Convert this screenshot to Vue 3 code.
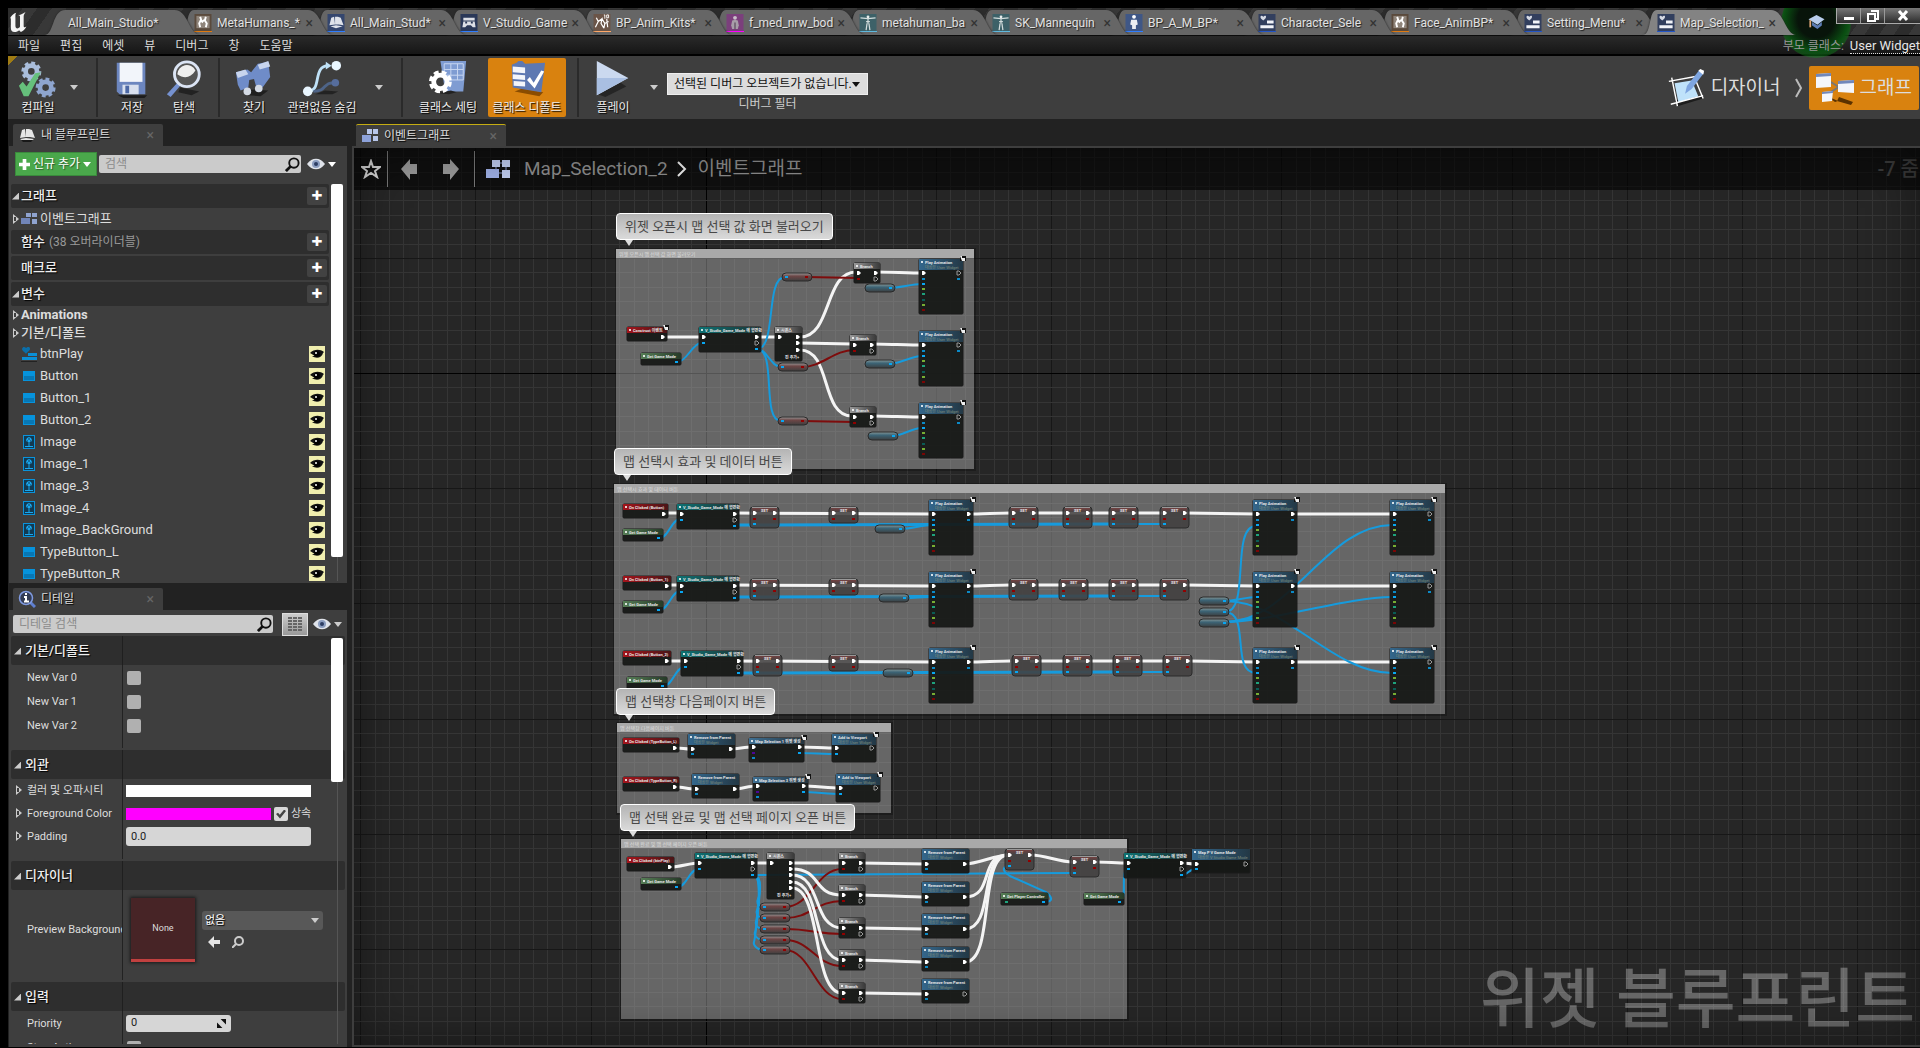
<script setup>
const tabs = [
  { name: 'MetaHumans_*', icon: 'anim', line: '#e07a10' },
  { name: 'All_Main_Stud*', icon: 'level', line: '#2f7dff' },
  { name: 'V_Studio_Game', icon: 'pad', line: '#2f7dff' },
  { name: 'BP_Anim_Kits*', icon: 'kit', line: '#ffa868' },
  { name: 'f_med_nrw_bod', icon: 'body', line: '#ff00ff' },
  { name: 'metahuman_ba', icon: 'skel', line: '#5fb8de' },
  { name: 'SK_Mannequin', icon: 'skel', line: '#5fb8de' },
  { name: 'BP_A_M_BP*', icon: 'person', line: '#2f7dff' },
  { name: 'Character_Sele', icon: 'widget', line: '#2456c8' },
  { name: 'Face_AnimBP*', icon: 'anim', line: '#e07a10' },
  { name: 'Setting_Menu*', icon: 'widget', line: '#2456c8' },
  { name: 'Map_Selection_', icon: 'widget', line: '#2456c8', active: true },
]
const menus = ['파일', '편집', '에셋', '뷰', '디버그', '창', '도움말']

const tabGlyphs = {
  anim: '<rect width="18" height="18" fill="#5a4a3c"/><rect x="2" y="2" width="14" height="13" fill="#8f857b"/><path d="M6 3l1 3-2 4 1 4M6 6l3 3M12 3l-1 4 2 3-1 4M11 6l-3 2" stroke="#fff" stroke-width="2" fill="none"/>',
  level: '<rect width="18" height="18" fill="#34466e"/><path d="M2 12L4 4l3-1 1 8zM8 11V3h3l1 8zM12 11l-1-8 3 1 3 8zM3 13l6-1 7 1-7 2z" fill="#dfe3ea"/>',
  pad: '<rect width="18" height="18" fill="#2a3858"/><path d="M3 4h12v3H3zM3 8h12l1 6h-3l-2-2H7l-2 2H2z" fill="#dcdfe6"/><path d="M5 9h2M11 9h2" stroke="#2a3858" stroke-width="2"/>',
  kit: '<rect width="18" height="18" fill="#6b5548"/><path d="M3 4l2 4-3 6M5 8l4-3-1 5 3 5M9 5l3 5 4-2M12 10l-1 5M14 5l1 9" stroke="#fff" stroke-width="1.3" fill="none"/><path d="M11 1h1v4M14 1h2v3h-2z" stroke="#fff" fill="none"/>',
  body: '<rect width="18" height="18" fill="#7b3f7c"/><circle cx="9" cy="4" r="2" fill="#c9c0c9"/><path d="M6 7l3-1 3 1 1 5-1 4H6l-1-4z" fill="#a79da8"/><path d="M9 9v7" stroke="#463046"/>',
  skel: '<rect width="18" height="18" fill="#3d6168"/><path d="M1 4l8 1 8-1M9 2v8M7 8h4M8 10l-1 7M10 10l1 7" stroke="#d2dcdc" stroke-width="1.3" fill="none"/><circle cx="9" cy="3" r="1.5" fill="#e8eded"/>',
  person: '<rect width="18" height="18" fill="#3f5786"/><circle cx="9" cy="3" r="2" fill="#fff"/><path d="M6 6h6l1 5-2 1v4H7v-4l-2-1z" fill="#eceef2"/>',
  widget: '<rect width="18" height="18" fill="#323f5e"/><path d="M2 3c1-2 2-1 3 0 1-1 3-2 3 0 0 2-2 3-3 4C4 6 2 5 2 3z" fill="#d6dae4"/><path d="M9 7h7v3H9zM2 12h14v3H2z" fill="#f1f3f8"/>',
}

const bigGlyphs = {
  compile: '<circle cx="14" cy="13" r="6" fill="none" stroke="#a9bddb" stroke-width="5"/><circle cx="14" cy="13" r="9" fill="none" stroke="#a9bddb" stroke-width="3" stroke-dasharray="4 3"/><circle cx="29" cy="30" r="6" fill="none" stroke="#8ea5cf" stroke-width="5"/><circle cx="29" cy="30" r="9" fill="none" stroke="#8ea5cf" stroke-width="3" stroke-dasharray="4 3"/><path d="M1 28l4-4 4 5 9-14 6-1L11 39H6z" fill="#66c07c"/>',
  save: '<path d="M6 38h31l-3 3H12z" fill="#1c1c1c"/><path d="M5 4h30v33H8l-3-3z" fill="#6c86bf"/><path d="M8 4h24v20H8z" fill="#f2f5fa"/><path d="M11 27h17v10H11z" fill="#d9e0ee"/><path d="M14 28h4v8h-4z" fill="#4c68a5"/>',
  find: '<path d="M17 30l20 4-8 4-14-3z" fill="#222"/><path d="M3 37l12-13 3 3L7 40z" fill="#7591cf"/><circle cx="24" cy="16" r="13" fill="#555" stroke="#dbe4f4" stroke-width="3"/><path d="M14 16a10 10 0 0 1 19-4c-5 8-12 9-19 4z" fill="#eee"/>',
  binoc: '<path d="M14 32l22 1-8 6-14-1z" fill="#1f1f1f"/><path d="M2 14l12-3 4 3 7-9 11-2 2 16-8 11-7-2-2-7-5 1-1 8-8 3-3-6z" fill="#6f8cc8"/><path d="M2 14l10-3 3 5-11 4zM25 6l11-4 2 6-11 3z" fill="#c8d5ee"/><circle cx="14" cy="34" r="4" fill="#d4dae4"/><circle cx="26" cy="31" r="4" fill="#d4dae4"/>',
  hide: '<path d="M14 37h18l6-3-14-1z" fill="#222"/><path d="M6 34c16 0 4-27 22-27" stroke="#bfe1f7" stroke-width="3" fill="none"/><path d="M12 34c14 0 10-9 20-9" stroke="#4e6488" stroke-width="3" fill="none"/><path d="M25 3l6 4-6 4z" fill="#bfe1f7"/><circle cx="36" cy="7" r="5" fill="#e9f6ff"/><circle cx="35" cy="25" r="4" fill="#566d9c"/><circle cx="6" cy="34" r="5" fill="#e9f6ff"/>',
  settings: '<path d="M13 2h27l-3 32H18z" fill="#7f9cd2"/><path d="M17 5h20v17H17zM17 11h20M24 5v17M31 5v17M17 17h20" stroke="#c9d8f1" fill="none"/><path d="M10 36l12 1 8-2-6-2z" fill="#222"/><circle cx="13" cy="24" r="7" fill="none" stroke="#fff" stroke-width="5"/><circle cx="13" cy="24" r="10" fill="none" stroke="#fff" stroke-width="4" stroke-dasharray="5 3"/>',
  defaults: '<path d="M8 34l26 5 4-4-22-4z" fill="#8a4c00"/><path d="M5 6l5-2 2-2h4l3 3 21-1-4 31-30-5z" fill="#5d78b2"/><path d="M6 8l13 1v6l-13-1zM6 16l13 1v5l-13-1zM7 23l12 1v5l-12-1z" fill="#f3f5fa"/><path d="M21 22l3-3 4 6 8-13 3 1-10 18z" fill="#fff"/>',
  play: '<path d="M5 37l24-12 6 4-22 11z" fill="#252525"/><path d="M4 2l33 18L4 38z" fill="#cbd9ef"/><path d="M4 20h33L4 38z" fill="#a9bfe2"/>',
}

const toolsA = [
  { label: '컴파일', icon: 'compile', cls: 'w42', drop: true },
  { sep: true },
  { label: '저장', icon: 'save', cls: 'w52' },
  { label: '탐색', icon: 'find', cls: 'w52' },
  { sep: true },
  { label: '찾기', icon: 'binoc', cls: 'w52' },
  { label: '관련없음 숨김', icon: 'hide', cls: 'w84', drop: true },
  { sep: true },
  { label: '클래스 세팅', icon: 'settings', cls: 'w74' },
  { label: '클래스 디폴트', icon: 'defaults', cls: 'w78 on' },
  { sep: true },
  { label: '플레이', icon: 'play', cls: 'w52', drop: true },
]

const varGlyphs = {
  widget: '<path d="M1 3c1-3 3-2 4-1 1-1 4-2 4 1 0 2-3 3-4 5C4 6 1 5 1 3z" fill="#0b6ea8"/><path d="M7 7h9v3H7zM1 11h15v3H1z" fill="#0a8fd6"/><path d="M0 15h16v1H0z" fill="#222"/>',
  button: '<rect x="2" y="3" width="12" height="10" fill="#0693dc"/><rect x="3" y="8" width="10" height="4" fill="#0877b4"/>',
  image: '<rect x="2.500" y="1.500" width="11" height="13" fill="#123a52" stroke="#0a93db"/><path d="M8 3l2 1 1 2-1 2H6L5 6l1-2z" fill="#19a8f0"/><path d="M7 5h2M6 7h1M9 7h1" stroke="#123a52"/><path d="M8 8v4M4 12.500h8" stroke="#19a8f0" fill="none"/>',
}
const variables = [
  ['btnPlay', 'widget'], ['Button', 'button'], ['Button_1', 'button'], ['Button_2', 'button'],
  ['Image', 'image'], ['Image_1', 'image'], ['Image_3', 'image'], ['Image_4', 'image'],
  ['Image_BackGround', 'image'], ['TypeButton_L', 'button'], ['TypeButton_R', 'button'],
]

/* ---- graph canvas ---- */
const STEP = 14.394
const lines = (from, origin, major, count) =>
  Array.from({ length: count }, (_, i) => i - from).map((k) => ({
    at: Math.floor(origin + k * STEP),
    kind: k === major ? 'axis' : k % 8 === 0 ? 'major' : 'minor',
  })).sort((a, b) => (a.kind === 'minor' ? 0 : 1) - (b.kind === 'minor' ? 0 : 1))
const vLines = lines(0, 360.7, 24, 180)
const hLines = lines(8, 258.4, 8, 110)

const comments = [
  { x: 616, y: 249, w: 358, h: 220, bx: 616, by: 213, text: '위젯 오픈시 맵 선택 값 화면 불러오기' },
  { x: 614, y: 484, w: 831, h: 230, bx: 614, by: 448, text: '맵 선택시 효과 및 데이터 버튼' },
  { x: 617, y: 723, w: 274, h: 90, bx: 616, by: 688, text: '맵 선택창 다음페이지 버튼' },
  { x: 621, y: 839, w: 506, h: 180, bx: 620, by: 804, text: '맵 선택 완료 및 맵 선택 페이지 오픈 버튼' },
]

const nodes = []
const pins = []
const pills = []
const marks = []
const wires = []
const pin = (x, y, c = 'exec', open = false) => pins.push({ x, y, c, open })
const node = (kind, x, y, w, h, title, sub) => nodes.push({ kind, x, y, w, h, title, sub, hh: sub ? 11 : 6 })
const wire = (c, x1, y1, x2, y2, t = 8, k = '') =>
  wires.push({ c: c + ' ' + k, d: `M${x1} ${y1}C${x1 + t} ${y1} ${x2 - t} ${y2} ${x2} ${y2}` })

function eventNode(x, y, w, title) {
  node('event', x, y, w, 14, title)
  pin(x + w - 5, y + 10)
}
function getter(x, y, title = 'Get Game Mode', w = 40) {
  node('pure', x, y, w, 12, title)
  pin(x + w - 5, y + 9, 'obj')
}
function cast(x, y) {
  node('cast', x, y, 62, 25, 'V_Studio_Game_Mode 에 형변환')
  pin(x + 4, y + 10); pin(x + 4, y + 16, 'obj')
  pin(x + 57, y + 10); pin(x + 57, y + 16, 'exec', true); pin(x + 57, y + 22, 'obj')
}
function branch(x, y) {
  node('flow', x, y, 26, 20, 'Branch')
  pin(x + 4, y + 10); pin(x + 4, y + 16, 'bool'); pin(x + 21, y + 10); pin(x + 21, y + 16, 'exec', true)
}
function playAnim(x, y, last) {
  node('func', x, y, 44, 55, 'Play Animation', '대상은 User Widget')
  pin(x + 4, y + 14); pin(x + 4, y + 20, 'obj', true); pin(x + 4, y + 25, 'obj')
  pin(x + 4, y + 30, 'float', true); pin(x + 4, y + 35, 'int', true); pin(x + 4, y + 41, 'byte', true)
  pin(x + 4, y + 46, 'float', true); pin(x + 4, y + 51, 'bool', true)
  pin(x + 39, y + 14, 'exec', last); pin(x + 39, y + 20, 'obj', true)
  marks.push([x + 44, y - 1])
}
function setter(x, y, tall = true) {
  node('set', x, y, 29, tall ? 21 : 16, 'SET')
  pin(x + 4, y + 6); pin(x + 24, y + 6); pin(x + 4, y + 12, 'bool'); pin(x + 24, y + 12, 'bool')
  if (tall) pin(x + 4, y + 17, 'obj')
}
function remove(x, y, open) {
  node('func', x, y, 47, 24, 'Remove from Parent', '대상은 Widget')
  pin(x + 4, y + 15); pin(x + 4, y + 20, 'obj', true); pin(x + 42, y + 15, 'exec', open)
}
function pill(x, y, kind) {
  pills.push({ x, y, kind })
  if (kind === 'bool') { pin(x + 4, y + 4, 'obj'); pin(x + 24, y + 4, 'bool') } else pin(x + 25, y + 4, 'obj')
}

/* opening group */
eventNode(627, 327, 40, 'Construct 이벤트')
marks.push([666, 327])
getter(641, 353)
cast(699, 327)
node('flow', 775, 327, 27, 34, '시퀀스')
pin(779, 337)
;[337, 343, 350].forEach((y) => pin(797, y))
pill(782, 273, 'bool'); pill(778, 363, 'bool'); pill(778, 417, 'bool')
branch(854, 263); branch(850, 335); branch(850, 407)
pill(865, 284, 'obj'); pill(865, 360, 'obj'); pill(868, 432, 'obj')
playAnim(919, 259, true); playAnim(919, 331, true); playAnim(919, 403, true)
wire('exec', 664, 337, 700, 337)
wire('exec', 758, 337, 777, 337)
wire('exec', 800, 337, 856, 272, 32)
wire('exec', 800, 343, 852, 344)
wire('exec', 800, 350, 852, 416, 32)
wire('exec', 877, 272, 921, 273)
wire('exec', 873, 344, 921, 345)
wire('exec', 873, 416, 921, 417)
wire('obj', 678, 362, 701, 343)
wire('obj', 757, 349, 785, 277, 20)
wire('obj', 757, 349, 781, 367, 10)
wire('obj', 757, 349, 781, 421, 20)
wire('bool', 806, 277, 858, 278)
wire('bool', 802, 367, 854, 350, 20)
wire('bool', 802, 421, 854, 422)
wire('obj', 890, 288, 921, 284)
wire('obj', 890, 364, 921, 356)
wire('obj', 893, 436, 921, 428)

/* selection rows */
const rows = [
  { y: 504, ew: 45, gx: 623, gy: 529, cx: 677, s: [750, 829, 1009, 1063, 1109, 1160], px: 875, py: 525, py0: 500, t: 'On Clicked (Button)' },
  { y: 576, ew: 48, gx: 623, gy: 601, cx: 677, s: [750, 829, 1009, 1059, 1109, 1160], px: 879, py: 594, py0: 572, t: 'On Clicked (Button_1)' },
  { y: 651, ew: 48, gx: 627, gy: 677, cx: 681, s: [753, 829, 1012, 1063, 1113, 1163], px: 883, py: 669, py0: 648, t: 'On Clicked (Button_2)' },
]
rows.forEach((r) => {
  const sy = r.py0 + 7
  const ex = r.py0 + 14
  eventNode(623, r.y, r.ew, r.t)
  getter(r.gx, r.gy)
  cast(r.cx, r.y)
  r.s.forEach((x, i) => setter(x, sy, i !== 1))
  pill(r.px, r.py, 'obj')
  playAnim(929, r.py0); playAnim(1253, r.py0); playAnim(1390, r.py0, true)
  wire('exec', 664, ex - 1, r.cx + 2, ex - 1)
  wire('exec', r.cx + 58, ex - 1, 932, ex)
  wire('exec', 970, ex, 1010, ex - 1)
  wire('exec', 1030, ex - 1, r.s[5] + 4, ex - 1)
  wire('exec', r.s[5] + 26, ex - 1, 1256, ex)
  wire('exec', 1294, ex, 1393, ex)
  wire('obj', r.gx + 37, r.gy + 9, r.cx + 3, ex + 5)
  wire('obj', r.cx + 58, ex + 11, r.s[4] + 4, ex + 10, 8, 'thick')
  wire('obj', r.s[4], ex + 10, r.s[5] + 4, ex + 10)
  wire('obj', r.px + 26, r.py + 4, 932, ex + 11)
})
pill(1199, 597, 'obj'); pill(1199, 608, 'obj'); pill(1199, 619, 'obj')
wire('obj', 1225, 601, 1256, 597)
wire('obj', 1225, 601, 1392, 673, 60)
wire('obj', 1225, 612, 1256, 526, 26)
wire('obj', 1225, 612, 1256, 673, 26)
wire('obj', 1225, 622, 1392, 525, 66)
wire('obj', 1225, 622, 1392, 597, 46)
wire('obj', 1225, 622, 1256, 618, 10)

/* paging rows */
;[[0, 738, 734, 'On Clicked (TypeButton_L)', 'Map Selection 1 위젯 생성'], [4, 777, 774, 'On Clicked (TypeButton_R)', 'Map Selection 3 위젯 생성']].forEach(([dx, y, fy, t, m]) => {
  eventNode(623, y, 56, t)
  remove(688 + dx, fy)
  node('make', 749 + dx, y, 55, 24, m)
  pin(753 + dx, y + 9); pin(753 + dx, y + 15, 'cls', true); pin(753 + dx, y + 20, 'obj', true)
  pin(799 + dx, y + 9); pin(799 + dx, y + 15, 'obj')
  node('func', 832 + dx, fy, 44, 28, 'Add to Viewport', '대상은 User Widget')
  pin(836 + dx, fy + 14); pin(836 + dx, fy + 20, 'obj'); pin(871 + dx, fy + 14, 'exec', true)
  marks.push([804 + dx, y - 1], [876 + dx, fy])
  wire('exec', 677, y + 10, 690 + dx, fy + 15, 4)
  wire('exec', 731 + dx, fy + 15, 751 + dx, y + 9, 4)
  wire('exec', 801 + dx, y + 9, 834 + dx, fy + 14, 4)
  wire('obj', 801 + dx, y + 15, 834 + dx, fy + 20, 4)
})

/* completion group */
eventNode(627, 857, 47, 'On Clicked (btnPlay)')
getter(641, 878)
cast(695, 853)
node('flow', 767, 853, 27, 46, '시퀀스')
pin(771, 863)
wire('exec', 672, 867, 698, 863, 6)
wire('obj', 678, 887, 698, 869)
wire('exec', 754, 863, 769, 863)
wire('obj', 754, 875, 1074, 873, 8)
;[0, 1, 2, 3, 4].forEach((i) => {
  const by = [853, 885, 918, 950, 983][i]
  const ry = [849, 882, 914, 947, 979][i]
  const py = [903, 914, 925, 936, 946][i]
  const oy = [863, 869, 875, 882, 888][i]
  pin(790, oy)
  pill(760, py, 'bool')
  branch(839, by)
  remove(922, ry, i === 4)
  wire('exec', 792, oy, 842, by + 10, i ? 30 : 4)
  wire('exec', 861, by + 10, 925, ry + 15)
  wire('bool', 785, py + 4, 842, by + 16, 26)
  wires.push({ c: 'obj', d: `M754 875C764 877 ${759 - i} ${py - 6} ${758 - i} ${py - 4}S756 ${py + 4} 764 ${py + 4}` })
  if (i < 4) wire('exec', 965, ry + 15, 1008, 855, i ? 30 : 12)
})
setter(1005, 849); setter(1070, 856)
getter(1001, 893, 'Get Player Controller', 47)
pin(1006, 902, 'int', true)
getter(1084, 893)
cast(1124, 853)
node('func', 1192, 849, 58, 24, 'Map P V Game Mode', '대상은 V Studio Game Mode')
pin(1196, 864); pin(1196, 869, 'obj'); pin(1245, 864, 'exec', true)
wire('exec', 1031, 855, 1073, 862, 14)
wire('exec', 1096, 862, 1127, 863)
wire('exec', 1182, 863, 1195, 864, 3)
wire('obj', 1182, 875, 1195, 869, 5)
wires.push({ c: 'obj', d: 'M1044 902C1056 902 1050 895 1046 892L1010 876C1000 870 1004 866 1009 866' })
wires.push({ c: 'obj', d: 'M1120 902C1128 898 1120 874 1127 869' })
</script>

<template>
  <div class="editor">
    <header class="titlebar">
      <svg class="logo" viewBox="0 0 24 24" aria-label="Unreal"><path d="M1 9c1-4 4-6 7-7-1 1-1 2-1 4v10c0 2 1 3 2 3s3-1 3-2V6c0-1-1-1-2-1 2-1 5-2 8-4-1 2-2 3-2 5v10c0 2 1 2 3 1-2 4-4 5-6 6l-2-2c-1 1-3 2-5 2-3 0-4-2-4-5V8c0-1-1-1-1 1z" fill="#f4f4f4"/></svg>
      <nav class="tabs">
        <button class="tab first">
          <svg class="shape" viewBox="0 0 153 25" preserveAspectRatio="none"><path d="M0 25C9 24 7 0 20 0H128C141 0 142 24 153 25z" /></svg>
          <span>All_Main_Studio*</span>
        </button>
        <button v-for="(t, i) in tabs" :key="t.name" class="tab" :class="{ active: t.active }" :style="{ zIndex: t.active ? 30 : 20 - i }">
          <svg class="shape" viewBox="0 0 153 25" preserveAspectRatio="none"><path d="M0 25C9 24 5 0 14 0H128C141 0 142 24 153 25z" /></svg>
          <svg class="ticon" viewBox="0 0 18 18" :style="{ borderBottomColor: t.line }" v-html="tabGlyphs[t.icon]"></svg>
          <span>{{ t.name }}</span><i>×</i>
        </button>
      </nav>
      <div class="halo"></div>
      <svg class="hat" viewBox="0 0 20 18"><path d="M1 6l9-5 9 5-8 6z" fill="#b9cdec"/><path d="M5 9l6 4 5-4v4l-5 4-6-4z" fill="#5d7cb5"/><path d="M3 7v8" stroke="#e2a878" stroke-width="2"/></svg>
      <div class="winbtns">
        <button aria-label="최소화"><svg viewBox="0 0 12 12"><path d="M1 7h10v3H1z" fill="#fff"/></svg></button>
        <button aria-label="복원"><svg viewBox="0 0 12 12"><path d="M4 1h7v8H9M1 4h7v7H1z" fill="none" stroke="#fff" stroke-width="2"/></svg></button>
        <button aria-label="닫기"><svg viewBox="0 0 12 12"><path d="M2 1l8 9M10 1l-8 9" stroke="#fff" stroke-width="3"/></svg></button>
      </div>
    </header>

    <nav class="menubar">
      <button v-for="m in menus" :key="m">{{ m }}</button>
      <span class="parent">부모 클래스:</span><a href="#">User Widget</a>
    </nav>

    <section class="toolbar">
      <template v-for="(t, i) in toolsA" :key="i">
        <div v-if="t.sep" class="sep"></div>
        <template v-else>
          <button class="tool" :class="t.cls">
            <svg viewBox="0 0 42 42" v-html="bigGlyphs[t.icon]"></svg>
            <span>{{ t.label }}</span>
          </button>
          <button v-if="t.drop" class="drop" :aria-label="t.label + ' 옵션'"><i class="down"></i></button>
        </template>
      </template>
      <div class="debug">
        <div class="selwrap">
          <select id="dbg"><option>선택된 디버그 오브젝트가 없습니다.</option></select><i class="down dark"></i>
        </div>
        <label for="dbg">디버그 필터</label>
      </div>
      <div class="modes">
        <button class="mode">
          <svg viewBox="0 0 40 42"><path d="M8 34l28-5 2 3-26 8z" fill="#1d1d1d"/><path d="M8 16l18-3 7 17-21 6z" fill="#bfe2fa"/><path d="M2 14l28-5M5 10l6 30M4 38l34-9M29 10l9 22" stroke="#fff" stroke-width="1.5" fill="none"/><path d="M19 27l2-8L34 2l5 3-13 17z" fill="#7ea5e0"/><path d="M33 3l2-2 4 2-1 4z" fill="#fff"/></svg>
          디자이너
        </button>
        <svg class="chev" viewBox="0 0 8 20"><path d="M1 1l5 9-5 9" fill="none" stroke="#bbb" stroke-width="2"/></svg>
        <button class="mode on">
          <svg viewBox="0 0 40 34"><path d="M12 25l8 6 3-1zM24 26l14 5-2 3-14-4z" fill="#5a3200"/><path d="M14 10l10 6M14 22l10-6" stroke="#777" stroke-width="2"/><path d="M1 3l15-1v14L1 17zM23 10l16-1v13l-16-1zM7 21l11-1-1 10-10 1z" fill="#f4f6fb"/><path d="M1 3l15-1v3L1 6zM23 10l16-1v3l-16 1zM7 21l11-1v2l-11 1z" fill="#7188bb"/></svg>
          그래프
        </button>
      </div>
    </section>

    <main class="work">
      <aside class="side">
        <div class="ptab">
          <svg viewBox="0 0 18 18"><path d="M2 12L4 4l3-1 1 8zM8 11V3h3l1 8zM12 11l-1-8 3 1 3 8zM2 13l6-1 8 1-3 2H5z" fill="#e6e6e6"/><path d="M3 14h12l-2 2H5z" fill="#181818"/></svg>
          <span>내 블루프린트</span><i>×</i>
        </div>
        <section class="panel bp">
          <div class="bar">
            <button class="add"><svg viewBox="0 0 12 12"><path d="M4 0h4v4h4v4H8v4H4V8H0V4h4z" fill="#fff"/></svg>신규 추가<i class="down white"></i></button>
            <div class="search"><input type="text" placeholder="검색" aria-label="검색"><svg viewBox="0 0 16 16"><circle cx="9.500" cy="6.500" r="5" fill="none" stroke="#111" stroke-width="2"/><path d="M6 10l-5 5" stroke="#111" stroke-width="3"/></svg></div>
            <button class="eye" aria-label="보기 옵션"><svg viewBox="0 0 18 12"><path d="M0 6c5-7 13-7 18 0-5 7-13 7-18 0z" fill="#dfe3ea"/><circle cx="9" cy="6" r="4" fill="#8b9dc0"/><circle cx="9" cy="6" r="2" fill="#2c3d63"/></svg><i class="down white"></i></button>
          </div>
          <div class="listwrap">
            <div class="list">
              <div class="head"><i class="open"></i><b>그래프</b><button aria-label="그래프 추가">✚</button></div>
              <div class="row"><i class="shut"></i>
                <svg class="vi" viewBox="0 0 16 16"><path d="M5 2h5v4H5zM11 2h5v4h-5zM11 8h5v5h-5z" fill="#8fa3cf"/><path d="M0 7h9v6H0z" fill="#7185b8"/></svg><span>이벤트그래프</span></div>
              <div class="head"><i></i><b>함수</b><small>(38 오버라이더블)</small><button aria-label="함수 추가">✚</button></div>
              <div class="head gap"><i></i><b>매크로</b><button aria-label="매크로 추가">✚</button></div>
              <div class="head gap"><i class="open"></i><b>변수</b><button aria-label="변수 추가">✚</button></div>
              <div class="row cat"><i class="shut"></i><b>Animations</b></div>
              <div class="row cat last"><i class="shut"></i><b>기본/디폴트</b></div>
              <div v-for="v in variables" :key="v[0]" class="row"><i></i>
                <svg class="vi" viewBox="0 0 16 16" v-html="varGlyphs[v[1]]"></svg><span>{{ v[0] }}</span>
                <button class="vis" :aria-label="v[0] + ' 표시'"><svg viewBox="0 0 16 16"><path d="M1 7c4-4 10-4 14-1l-1 1c-1 5-7 6-11 3l3 0c-2-1-3-2-5-3z" fill="#111"/><circle cx="8" cy="8" r="3" fill="#000"/><circle cx="7" cy="7" r="1" fill="#fff"/></svg></button>
              </div>
            </div>
            <div class="scroll"><div></div></div>
          </div>
        </section>

        <div class="ptab second">
          <svg viewBox="0 0 18 18"><path d="M12 12l5 5" stroke="#5f7fd0" stroke-width="3"/><circle cx="8" cy="8" r="6.500" fill="#333c55" stroke="#7f9ae0" stroke-width="1.500"/><path d="M8 3v2M6 7h2v4M6 11.500h5" stroke="#fff" stroke-width="2" fill="none"/></svg>
          <span>디테일</span><i>×</i>
        </div>
        <section class="panel details">
          <div class="bar">
            <div class="search"><input type="text" placeholder="디테일 검색" aria-label="디테일 검색"><svg viewBox="0 0 16 16"><circle cx="9.500" cy="6.500" r="5" fill="none" stroke="#111" stroke-width="2"/><path d="M6 10l-5 5" stroke="#111" stroke-width="3"/></svg></div>
            <button class="matrix" aria-label="프로퍼티 매트릭스"><svg viewBox="0 0 14 14"><path d="M0 1h4M5 1h4M10 1h4M0 4h4M5 4h4M10 4h4M0 7h4M5 7h4M10 7h4M0 10h4M5 10h4M10 10h4M0 13h4M5 13h4M10 13h4" stroke="#666" stroke-width="2"/></svg></button>
            <button class="eye" aria-label="디테일 보기 옵션"><svg viewBox="0 0 18 12"><path d="M0 6c5-7 13-7 18 0-5 7-13 7-18 0z" fill="#dfe3ea"/><circle cx="9" cy="6" r="4" fill="#8b9dc0"/><circle cx="9" cy="6" r="2" fill="#2c3d63"/></svg><i class="down"></i></button>
          </div>
          <div class="props">
            <div class="group">
              <h3><i class="open"></i>기본/디폴트</h3>
              <div v-for="n in 3" :key="n" class="prop"><label :for="'nv' + n">New Var {{ n - 1 }}</label><div><input :id="'nv' + n" type="checkbox"></div></div>
            </div>
            <div class="group tight">
              <h3><i class="open"></i>외관</h3>
              <div class="prop"><label><i class="shut"></i>컬러 및 오파시티</label><div><button class="swatch" aria-label="컬러 및 오파시티"></button></div></div>
              <div class="prop"><label><i class="shut"></i>Foreground Color</label><div><button class="swatch pink" aria-label="Foreground Color"></button><input id="inh" type="checkbox" checked><label for="inh" class="inh">상속</label></div></div>
              <div class="prop"><label for="pad"><i class="shut"></i>Padding</label><div><input id="pad" class="field" type="text" value="0.0"></div></div>
            </div>
            <div class="group">
              <h3><i class="open"></i>디자이너</h3>
              <div class="prop tall"><label for="asset">Preview Background</label>
                <div><div class="thumb">None</div>
                  <div class="pick"><div class="selwrap"><select id="asset"><option>없음</option></select><i class="down"></i></div>
                    <div class="acts"><button aria-label="선택 항목 사용"><svg viewBox="0 0 12 12"><path d="M0 6l6-6v4h6v4H6v4z" fill="#e4e4e4"/></svg></button><button aria-label="찾아보기"><svg viewBox="0 0 12 12"><circle cx="7" cy="5" r="4" fill="none" stroke="#ccc" stroke-width="2"/><path d="M4 8l-4 4" stroke="#ccc" stroke-width="2"/></svg></button></div></div></div>
              </div>
            </div>
            <div class="group">
              <h3><i class="open"></i>입력</h3>
              <div class="prop"><label for="prio">Priority</label><div><div class="spin"><input id="prio" class="field" type="text" value="0"><svg viewBox="0 0 10 10"><path d="M4 0h6v6zM0 4l6 6H0z" fill="#111"/></svg></div></div></div>
              <div class="prop"><label for="stop">Stop Action</label><div><input id="stop" type="checkbox"></div></div>
            </div>
            <div class="scroll over"><div></div></div>
          </div>
        </section>
      </aside>

      <section class="main">
        <div class="ptab live">
          <svg viewBox="0 0 18 18"><path d="M6 2h5v5H6zM12 2h5v5h-5zM12 9h5v5h-5z" fill="#b7c6ea"/><path d="M1 8h9v7H1z" fill="#8da2da"/></svg>
          <span>이벤트그래프</span><i>×</i>
        </div>
        <div class="canvas">
          <svg class="graph">
            <defs>
              <linearGradient id="g-event"><stop offset="0" stop-color="#a3141b"/><stop offset="1" stop-color="#4a1517"/></linearGradient>
              <linearGradient id="g-pure"><stop offset="0" stop-color="#557d55"/><stop offset="1" stop-color="#263a28"/></linearGradient>
              <linearGradient id="g-cast"><stop offset="0" stop-color="#0d7273"/><stop offset="1" stop-color="#1d3334"/></linearGradient>
              <linearGradient id="g-flow"><stop offset="0" stop-color="#999"/><stop offset="1" stop-color="#3a3a3a"/></linearGradient>
              <linearGradient id="g-func"><stop offset="0" stop-color="#34678c"/><stop offset="1" stop-color="#233845"/></linearGradient>
              <linearGradient id="g-make"><stop offset="0" stop-color="#3f7093"/><stop offset="1" stop-color="#24343f"/></linearGradient>
              <linearGradient id="g-set" x2="0" y2="1"><stop offset="0" stop-color="#7d4040"/><stop offset="1" stop-color="#484343"/></linearGradient>
              <linearGradient id="g-pb" x2="0" y2="1"><stop offset="0" stop-color="#999"/><stop offset=".4" stop-color="#6c4646"/><stop offset="1" stop-color="#3f3f3f"/></linearGradient>
              <linearGradient id="g-po" x2="0" y2="1"><stop offset="0" stop-color="#899"/><stop offset=".4" stop-color="#3c6476"/><stop offset="1" stop-color="#3c3f40"/></linearGradient>
            </defs>
            <g transform="translate(-354 -148)">
              <rect v-for="l in vLines" :key="'v' + l.at" :class="l.kind" :x="l.at" y="148" width="1" height="1500"/>
              <rect v-for="l in hLines" :key="'h' + l.at" :class="l.kind" x="354" :y="l.at" width="2600" height="1"/>
              <g v-for="c in comments" :key="c.text">
                <rect class="shade" :x="c.x - 1" :y="c.y - 1" :width="c.w + 3" :height="c.h + 3"/>
                <rect class="cbody" :x="c.x" :y="c.y" :width="c.w" :height="c.h"/>
                <rect class="cbar" :x="c.x" :y="c.y" :width="c.w" height="9"/>
                <text class="ctext" :x="c.x + 3" :y="c.y + 7">{{ c.text }}</text>
              </g>
              <path v-for="(w, i) in wires" :key="i" class="wire" :class="w.c" :d="w.d"/>
              <g v-for="(n, i) in nodes" :key="'n' + i">
                <template v-if="n.kind === 'set'">
                  <rect class="setbody" :x="n.x" :y="n.y" :width="n.w" :height="n.h" rx="3"/>
                  <rect :x="n.x + 2" :y="n.y" :width="n.w - 4" height="5" fill="url(#g-set)"/>
                  <rect :x="n.x + 2" :y="n.y" :width="n.w - 4" height="1" fill="#999"/>
                  <text class="ntext" :x="n.x + 11" :y="n.y + 5">{{ n.title }}</text>
                </template>
                <template v-else>
                  <rect class="nbody" :x="n.x" :y="n.y" :width="n.w" :height="n.h" rx="1"/>
                  <rect :x="n.x" :y="n.y" :width="n.w" :height="n.hh" :fill="`url(#g-${n.kind})`"/>
                  <rect :x="n.x + 2" :y="n.y + 2" width="2" height="2" fill="#fff" opacity=".8"/>
                  <text class="ntext" :x="n.x + 6" :y="n.y + 5">{{ n.title }}</text>
                  <text v-if="n.sub" class="nsub" :x="n.x + 6" :y="n.y + 10">{{ n.sub }}</text>
                </template>
              </g>
              <text class="ntext" x="785" y="359">핀 추가+</text>
              <text class="ntext" x="777" y="897">핀 추가+</text>
              <rect v-for="(p, i) in pills" :key="'p' + i" class="pill" :x="p.x" :y="p.y" width="30" height="8" rx="4" :fill="p.kind === 'bool' ? 'url(#g-pb)' : 'url(#g-po)'"/>
              <template v-for="(p, i) in pins" :key="'i' + i">
                <path v-if="p.c === 'exec'" class="xpin" :class="{ hollow: p.open }" :d="`M${p.x - 1} ${p.y - 2}h2l2 2-2 2h-2z`"/>
                <rect v-else :class="['pin', p.c, { hollow: p.open }]" :x="p.x - 1" :y="p.y - 1" :width="3" :height="2"/>
              </template>
              <g v-for="(m, i) in marks" :key="'m' + i"><rect :x="m[0] - 3" :y="m[1] - 2" width="6" height="5" fill="#111"/><path :d="`M${m[0] - 3} ${m[1] - 2}h2v2h3v3h-3z`" fill="#eee"/></g>
            </g>
          </svg>
          <div v-for="c in comments" :key="c.text" class="bubble" :style="{ left: c.bx - 354 + 'px', top: c.by - 148 + 'px' }">{{ c.text }}</div>
          <div class="crumbs">
            <button aria-label="즐겨찾기"><svg class="star" viewBox="0 0 20 20"><path d="M10 2l2 6h7l-5 4 2 6-6-4-6 4 2-6-5-4h7z" fill="none" stroke="#ddd" stroke-width="2"/></svg></button>
            <div class="bsep"></div>
            <button aria-label="뒤로"><svg class="arr" viewBox="0 0 18 22"><path d="M1 11L10 1v5h7v10h-7v6z" fill="#999"/></svg></button>
            <button aria-label="앞으로" class="fwd"><svg class="arr" viewBox="0 0 18 22"><path d="M17 11L8 1v5H1v10h7v6z" fill="#999"/></svg></button>
            <div class="bsep"></div>
            <svg class="gicon" viewBox="0 0 24 20"><path d="M6 1h8v7H6zM16 1h8v7h-8zM16 11h8v8h-8z" fill="#c0cdf0"/><path d="M0 10h13v9H0z" fill="#9fb0e6"/><path d="M10 8v3M14 4h2M13 14h3M20 8v3" stroke="#8a98c8"/></svg>
            <a href="#">Map_Selection_2</a>
            <svg class="gt" viewBox="0 0 10 16"><path d="M1 1l7 7-7 7" fill="none" stroke="#eee" stroke-width="2"/></svg>
            <span>이벤트그래프</span>
            <em>-7 줌</em>
          </div>
          <div class="water">위젯 블루프린트</div>
        </div>
      </section>
    </main>
  </div>
</template>

<style>
html, body { margin: 0; background: #000; }
body { overflow: hidden; }
</style>

<style scoped>
* { box-sizing: border-box; }
.editor { height: 100vh; padding: 8px 0 1px 8px; display: flex; flex-direction: column; background: #000; color: #ddd; font: 12px/18px Roboto, "Noto Sans CJK KR", sans-serif; overflow: hidden; }
button, input, select { font: inherit; color: inherit; margin: 0; padding: 0; border: 0; background: none; border-radius: 0; outline: 0; }
button, a, span, b, small, label { white-space: nowrap; }
svg { display: block; flex: none; }
i { font-style: normal; }

.titlebar { position: relative; height: 28px; flex: none; display: flex; padding-top: 2px; border-bottom: 1px solid #000; background: repeating-linear-gradient(125deg, #2c2c2c 0 12px, #383838 12px 24px); }
.logo { width: 22px; height: 24px; margin: 0 14px 0 1px; }
.tabs { display: flex; flex: 1; min-width: 0; }
.tab { position: relative; width: 153px; height: 25px; flex: none; margin-right: -20px; display: flex; align-items: center; gap: 4px; padding: 0 20px 0 14px; color: #e2e2e2; text-shadow: 1px 1px 1px #222; }
.tab.first { width: 155px; padding-left: 23px; z-index: 25; }
.tab span { position: relative; flex: 1; min-width: 0; text-align: left; }
.tab i { position: relative; color: #333; font-size: 14px; text-shadow: none; }
.tab .shape { position: absolute; inset: 0; width: 100%; height: 100%; filter: drop-shadow(0 0 1px #222); }
.tab .shape path { fill: #666; }
.tab.active .shape path { fill: #838383; }
.ticon { position: relative; width: 18px; height: 18px; margin-right: 1px; border-bottom: 1px solid; }
.halo { position: absolute; right: 69px; top: -20px; width: 70px; height: 70px; border-radius: 50%; background: radial-gradient(circle at 50% 45%, #08140a 0 35%, #0a5012 62%, #108c1a66 72%, #108c1a22 84%); clip-path: inset(20px 0 0 0); z-index: 1; pointer-events: none; }
.hat { position: absolute; right: 94px; top: 6px; width: 19px; height: 16px; z-index: 2; }
.winbtns { position: relative; z-index: 3; display: flex; align-self: flex-start; margin-top: -2px; width: 84px; border: 1px solid #aaa; border-width: 0 0 1px 1px; background: linear-gradient(#777, #2c2c2c); }
.winbtns button { flex: 1; height: 15px; display: grid; place-items: center; border-left: 1px solid #999; }
.winbtns button:first-child { border: 0; }
.winbtns button:last-child { flex: 1.5; }
.winbtns svg { width: 12px; height: 12px; }

.menubar { height: 20px; flex: none; display: flex; align-items: center; padding: 1px 0 0 10px; gap: 20px; background: linear-gradient(#2a2a2a, #161616); border-bottom: 2px solid #000; }
.parent { position: relative; z-index: 2; margin-left: auto; margin-right: -14px; color: #999; }
.menubar a { position: relative; z-index: 2; color: #e6e6e6; line-height: 15px; border-bottom: 1px dotted #ddd; text-decoration: none; font-size: 13px; }

.toolbar { height: 63px; flex: none; display: flex; padding: 2px 1px 2px 9px; background: linear-gradient(135deg, #a07c14 7px, #3e3e3e 7px); }
.tool { display: flex; flex-direction: column; align-items: center; height: 59px; padding-top: 1px; border-radius: 2px; text-shadow: 1px 1px 1px #000; color: #eee; }
.tool svg { width: 40px; height: 40px; }
.w42 { width: 42px; } .w52 { width: 52px; } .w74 { width: 74px; } .w78 { width: 78px; } .w84 { width: 84px; }
.on { background: #d9820f; }
.tool.on { margin: 0 3px; }
.drop { width: 29px; display: grid; place-items: center; }
.sep { width: 2px; margin: 0 8px; background: #2a2a2a; }
.down { flex: none; width: 0; height: 0; border: 4px solid transparent; border-top: 5px solid #ccc; border-bottom: 0; }
.down.dark { border-top-color: #111; }
.down.white { border-top-color: #fff; }
.selwrap { position: relative; display: flex; align-items: center; }
.selwrap select { appearance: none; width: 100%; }
.selwrap .down { position: absolute; right: 8px; pointer-events: none; }
.debug { display: flex; flex-direction: column; align-items: center; padding-top: 15px; margin-left: -1px; width: 201px; }
.debug .selwrap { width: 100%; }
.debug select { height: 22px; padding-left: 6px; background: #dcdcdc; color: #111; border: 1px solid #eee; }
.debug label { color: #ccc; line-height: 19px; }
.modes { margin-left: auto; display: flex; align-items: center; padding-top: 1px; font-size: 19px; }
.mode { display: flex; align-items: center; gap: 5px; height: 44px; padding: 0 7px 0 6px; color: #ddd; border-radius: 2px; line-height: 24px; }
.mode svg { width: 40px; height: 40px; }
.chev { width: 8px; height: 20px; margin: 0 6px 0 7px; }

.work { flex: 1; min-height: 0; display: flex; gap: 5px; padding: 5px 0 0 1px; background: #222; }
.side { width: 338px; flex: none; display: flex; flex-direction: column; }
.ptab { width: 150px; height: 22px; flex: none; margin-left: 4px; display: flex; align-items: center; padding: 0 9px 0 5px; gap: 5px; background: #3e3e3e; border-radius: 2px 2px 0 0; }
.ptab svg { width: 18px; height: 18px; }
.ptab span { flex: 1; text-shadow: 1px 1px 1px #000; }
.ptab i { color: #666; font-size: 14px; }
.ptab.second { margin-top: 5px; }
.ptab.live { border-top: 1px solid #c4ac12; }
.panel { flex: 1; min-height: 0; background: #3e3e3e; display: flex; flex-direction: column; overflow: hidden; }
.bar { display: flex; align-items: center; flex: none; }
.bp .bar { padding: 6px 11px 8px 6px; gap: 2px; }
.add { display: flex; align-items: center; gap: 3px; width: 82px; height: 24px; padding-left: 3px; background: #4aa84b; border: 1px solid #3a8a3c; color: #fff; text-shadow: 1px 1px 1px #2a5a2b; }
.add svg { width: 11px; height: 11px; }
.search { flex: 1; min-width: 0; display: flex; align-items: center; height: 18px; background: #cbcbcb; border-radius: 2px; padding: 0 1px 0 6px; }
.search input { flex: 1; min-width: 0; color: #111; height: 18px; }
.search input::placeholder { color: #8b8b8b; opacity: 1; }
.search svg { width: 15px; height: 15px; }
.eye { display: flex; align-items: center; gap: 3px; margin-left: 4px; }
.eye svg { width: 18px; height: 12px; }
.listwrap { flex: 1; min-height: 0; display: flex; gap: 2px; padding: 0 4px 2px 2px; font-size: 13px; }
.list { flex: 1; overflow: hidden; }
.head { height: 24px; display: flex; align-items: center; background: #2e2e2e; border-radius: 2px; padding-right: 2px; color: #eee; text-shadow: 1px 1px 1px #000; }
.head.gap { margin-top: 2px; }
.head b { font-weight: 500; }
.head small { font-size: 12px; color: #999; margin-left: 4px; text-shadow: none; }
.head button { margin-left: auto; width: 20px; height: 18px; line-height: 18px; background: #424242; border-radius: 2px; color: #fff; font-family: "DejaVu Sans", sans-serif; font-size: 13px; text-shadow: none; }
.head > i, .row > i { width: 10px; flex: none; }
.row { height: 22px; display: flex; align-items: center; padding-right: 4px; }
.row.cat { height: 18px; }
.row.cat.last { margin-bottom: 1px; }
.row.cat b { font-weight: 500; }
.row.cat:not(.last) b { font-weight: 700; }
.vi { width: 16px; height: 16px; margin-right: 3px; }
.vis { margin-left: auto; width: 16px; height: 16px; background: #f0eeae; }
i.open::before { content: ""; display: block; width: 7px; height: 7px; margin-left: 1px; background: #ccc; clip-path: polygon(100% 0, 100% 100%, 0 100%); }
i.shut::before { content: ""; display: block; width: 6px; height: 10px; margin-left: 2px; background: linear-gradient(#3e3e3e, #3e3e3e) 1px 3px / 2px 4px no-repeat #ccc; clip-path: polygon(0 0, 100% 50%, 0 100%); }
.scroll { width: 12px; background: linear-gradient(#555, #555) 6px 0 / 1px 100% no-repeat; }
.scroll div { width: 12px; height: 94%; background: #fff; border-radius: 2px; }
.scroll.over { position: absolute; right: 2px; top: 2px; bottom: 0; }
.scroll.over div { height: 144px; }

.details .bar { height: 26px; padding: 2px 5px 0 4px; }
.matrix { width: 26px; height: 23px; margin-left: 9px; display: grid; place-items: center; background: linear-gradient(#ccc, #999); border: 1px solid #ddd; }
.matrix svg { width: 14px; height: 14px; }
.details .eye { margin-left: 5px; }
.props { position: relative; flex: 1; min-height: 0; overflow: hidden; margin: 0 2px 3px; font-size: 11px; }
.group { padding-bottom: 11px; margin-bottom: 2px; background: linear-gradient(#222, #222) 111px 0 / 1px 100% no-repeat; }
.group h3 { display: flex; align-items: center; gap: 4px; height: 29px; margin: 0; padding-left: 2px; font-size: 13px; font-weight: 500; color: #eee; text-shadow: 1px 1px 1px #000; background: linear-gradient(#1f1f1f, #1f1f1f) 111px 0 / 1px 100% no-repeat #2e2e2e; border-radius: 2px; }
.group h3 i { padding-top: 1px; }
.prop { display: grid; grid-template-columns: 111px 1fr; height: 24px; align-items: center; }
.tight .prop { height: 23px; }
.prop.tall { height: 79px; }
.prop > label { position: relative; padding: 1px 0 0 16px; overflow: hidden; }
.prop > label .shut { position: absolute; left: 3px; top: 4px; }
.prop > div { display: flex; align-items: center; padding-left: 4px; }
input[type="checkbox"] { appearance: none; width: 14px; height: 14px; margin: 1px 0 0 1px; background: #b0b0b0; border-radius: 2px; }
input[type="checkbox"]:checked { background: #d8d8d8; display: grid; place-items: center; }
input[type="checkbox"]:checked::before { content: ""; width: 10px; height: 9px; background: #444; clip-path: polygon(0 50%, 20% 35%, 38% 58%, 82% 0, 100% 18%, 40% 100%); }
.prop .swatch { width: 185px; height: 12px; background: #fff; }
.prop .pink { width: 145px; background: #f0f; margin-right: 2px; }
.inh { margin-left: 3px; }
.field { width: 185px; height: 19px; padding-left: 5px; background: #d6d6d6; color: #222; border-radius: 3px; }
.spin { position: relative; width: 105px; }
.spin .field { width: 100%; height: 17px; display: block; }
.spin svg { position: absolute; right: 5px; top: 4px; width: 9px; height: 9px; }
.thumb { width: 64px; height: 64px; margin: 0 7px 0 5px; display: grid; place-items: center; background: #472426; border-bottom: 3px solid #c1403f; box-shadow: 0 0 3px 1px #1a1a1a; font-size: 9px; }
.pick .selwrap { width: 121px; }
.pick select { height: 19px; padding-left: 3px; background: #585858; border-radius: 3px; color: #fff; text-shadow: 1px 1px 1px #000; }
.pick .selwrap .down { right: 4px; }
.acts { display: flex; gap: 12px; padding: 6px 6px 0; }
.acts svg { width: 12px; height: 12px; }

.main { flex: 1; min-width: 0; display: flex; flex-direction: column; }
.canvas { position: relative; flex: 1; min-height: 0; border: 2px solid #3e3e3e; border-right: 0; background: #262626; overflow: hidden; }
.graph { position: absolute; inset: 0; width: 100%; height: 100%; }
.canvas::after { content: ""; position: absolute; inset: 0; box-shadow: inset 0 0 50px rgba(0, 0, 0, .45); pointer-events: none; }
.minor { fill: #353535; }
.major { fill: #171717; }
.axis { fill: #000; }
.shade { fill: rgba(0, 0, 0, .25); }
.cbody { fill: rgba(255, 255, 255, .33); }
.cbar { fill: #a9a9a9; }
.ctext { font-size: 5px; fill: #ddd; }
.wire { fill: none; }
.wire.exec { stroke: #f4f4f4; stroke-width: 3px; }
.wire.obj { stroke: #169bdd; stroke-width: 2px; }
.wire.thick { stroke-width: 3px; }
.wire.bool { stroke: #7e0c0c; stroke-width: 2px; }
.nbody { fill: rgba(22, 24, 22, .93); stroke: #1a1a1a; }
.setbody { fill: rgba(66, 64, 64, .88); stroke: #2b2b2b; }
.ntext { font-size: 4px; font-weight: 700; fill: #e6e6e6; }
.nsub { font-size: 4px; fill: #7d8c7d; }
.pill { stroke: #2a2a2a; stroke-width: 1; }
.xpin { fill: #fff; }
.xpin.hollow { fill: none; stroke: #999; stroke-width: 1; }
.pin.obj { fill: #08a6f2; } .pin.bool { fill: #920000; } .pin.float { fill: #8ed23a; } .pin.int { fill: #1fc495; } .pin.byte { fill: #066b64; } .pin.cls { fill: #5a00b8; }
.pin.hollow { opacity: .8; }
.bubble { position: absolute; height: 27px; padding: 0 8px; border: 1px solid #fff; border-radius: 4px; background: linear-gradient(#b4b4b4, #dadada); color: #484848; font-size: 13px; line-height: 25px; white-space: nowrap; }
.bubble::after { content: ""; position: absolute; left: 8px; top: 26px; border: 4px solid transparent; border-top: 6px solid #ddd; border-bottom: 0; }
.crumbs { position: relative; height: 42px; display: flex; align-items: center; padding-left: 7px; background: rgba(0, 0, 0, .6); color: #8c8c8c; font-size: 19px; line-height: 26px; }
.crumbs a { color: #8c8c8c; text-decoration: none; margin-left: 14px; }
.star { width: 20px; height: 20px; }
.bsep { width: 1px; height: 36px; margin: 0 12px 0 6px; background: #777; }
.arr { width: 18px; height: 22px; }
.crumbs .fwd { margin: 0 8px 0 24px; }
.gicon { width: 24px; height: 20px; margin-left: -1px; }
.gt { width: 10px; height: 16px; margin: 0 11px 0 9px; }
.crumbs em { margin: 0 1px 0 auto; font-style: normal; font-weight: 500; color: #3c3c3c; font-size: 20px; }
.water { position: absolute; right: 5px; bottom: 5px; font-size: 65px; line-height: 80px; font-weight: 500; color: rgba(255, 255, 255, .3); white-space: nowrap; }
</style>
